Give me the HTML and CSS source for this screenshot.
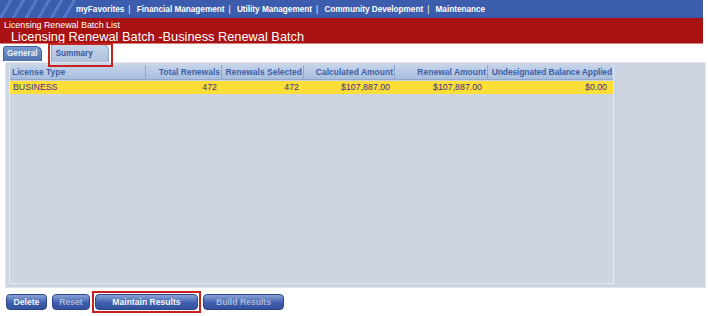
FILE: index.html
```html
<!DOCTYPE html>
<html lang="en">
<head>
    <meta charset="UTF-8">
    <title>Licensing Renewal Batch</title>
    <link rel="stylesheet" href="styles.css">
</head>
<body>
    <div class="topnav">
        <div class="stripes"></div>
        <div class="nav-links">
            <a>myFavorites</a><span class="sep">|</span>
            <a>Financial Management</a><span class="sep">|</span>
            <a>Utility Management</a><span class="sep">|</span>
            <a>Community Development</a><span class="sep">|</span>
            <a>Maintenance</a>
        </div>
    </div>

    <div class="titlebar">
        <div class="crumb">Licensing Renewal Batch List</div>
        <h1>Licensing Renewal Batch -Business Renewal Batch</h1>
    </div>

    <div class="tabs">
        <div class="tab">General</div>
        <div class="tab tab-active highlight">Summary</div>
    </div>

    <div class="panel">
        <div class="grid">
            <div class="row head">
                <div class="c c1">License Type</div>
                <div class="c c2 num">Total Renewals</div>
                <div class="c c3 num">Renewals Selected</div>
                <div class="c c4 num">Calculated Amount</div>
                <div class="c c5 num">Renewal Amount</div>
                <div class="c c6 num">Undesignated Balance Applied</div>
            </div>
            <div class="row data">
                <div class="c c1">BUSINESS</div>
                <div class="c c2 num">472</div>
                <div class="c c3 num">472</div>
                <div class="c c4 num">$107,887.00</div>
                <div class="c c5 num">$107,887.00</div>
                <div class="c c6 num">$0.00</div>
            </div>
        </div>
    </div>

    <div class="actions">
        <button class="btn b-delete">Delete</button>
        <button class="btn off b-reset">Reset</button>
        <span class="highlight btn-wrap"><button class="btn b-maintain">Maintain Results</button></span>
        <button class="btn off b-build">Build Results</button>
    </div>
</body>
</html>
```

FILE: styles.css
```css
body {
    margin: 0;
    width: 708px;
    height: 316px;
    background: #ffffff;
    font-family: "Liberation Sans", Arial, sans-serif;
    overflow: hidden;
}
.topnav {
    display: flex;
    align-items: center;
    height: 18px;
    width: 703px;
    background-color: #3c5cad;
}
.stripes {
    width: 76px;
    height: 100%;
    background: repeating-linear-gradient(120deg, #3c5cad 0, #3c5cad 8px, #5676c8 8px, #5676c8 11px);
}
.nav-links {
    color: #ffffff;
    font-size: 8.2px;
    font-weight: bold;
    white-space: nowrap;
}
.nav-links .sep {
    margin: 0 4px;
    font-weight: normal;
}
.titlebar {
    width: 703px;
    height: 25px;
    background-color: #a81212;
    color: #ffffff;
    border-bottom: 1px solid #d88080;
}
.crumb {
    font-size: 8.9px;
    padding: 2px 0 0 4px;
    line-height: 10px;
}
.titlebar h1 {
    margin: 0;
    font-size: 12.8px;
    font-weight: normal;
    line-height: 13px;
    padding-left: 11px;
}
.tabs {
    display: flex;
    align-items: flex-end;
    height: 18px;
    padding-left: 3px;
    gap: 9px;
}
.tab {
    height: 14px;
    margin-bottom: 1px;
    padding: 0 3px;
    font-size: 8.2px;
    font-weight: bold;
    line-height: 14px;
    color: #eef2fa;
    background: linear-gradient(#7a9bd0, #4e72ad);
    border-radius: 3px 6px 0 0;
    border: 1px solid #3d5f99;
    border-bottom: none;
}
.tab-active {
    height: 17px;
    line-height: 17px;
    margin-bottom: 0;
    width: 48px;
    padding: 0 4px;
    color: #3a55a0;
    background: linear-gradient(#c7d4e8, #aec0da);
    border-color: #8ea6cc;
}
.highlight {
    outline: 2px solid #c4231f;
    outline-offset: 1px;
}
.tabs .highlight {
    outline: none;
    position: relative;
}
.tabs .highlight::after {
    content: "";
    position: absolute;
    left: -4px;
    right: -5px;
    top: -2px;
    height: 20px;
    border: 2px solid #c4231f;
}
.panel {
    display: flex;
    margin-left: 5px;
    width: 696px;
    height: 222px;
    padding: 2px 0 0 3px;
    background-color: #cdd5e2;
    border: 1px solid #dfe5ee;
}
.grid {
    width: 603px;
    height: 218px;
    border: 1px solid #e6ebf2;
    border-top: none;
}
.row {
    display: flex;
    height: 14px;
    line-height: 14px;
    font-size: 8.5px;
    font-weight: bold;
}
.head {
    color: #3f5fa6;
    background: linear-gradient(#c4d4ea, #a8bedd);
    border-bottom: 1px solid #8fa6c9;
}
.head .c {
    border-right: 1px solid #8ea6cb;
    padding: 0 1px 0 2px;
}
.data {
    margin-top: 1px;
    color: #3d318f;
    background-color: #fddd38;
    font-weight: normal;
    font-size: 8.8px;
    height: 13px;
    line-height: 13px;
}
.c {
    padding: 0 5px 0 3px;
    box-sizing: border-box;
    white-space: nowrap;
    overflow: hidden;
}
.num {
    text-align: right;
}
.c1 { width: 136px; }
.c2 { width: 76px; }
.c3 { width: 82px; }
.c4 { width: 91px; }
.c5 { width: 93px; }
.c6 { width: 124px; }
.head .c6 {
    border-right: none;
    padding: 0;
    letter-spacing: -0.15px;
    overflow: visible;
}
.data .c5 { padding-right: 6px; }
.actions {
    display: flex;
    align-items: center;
    gap: 5px;
    padding: 6px 0 0 6px;
}
.btn {
    height: 16px;
    padding: 0;
    font-family: "Liberation Sans", Arial, sans-serif;
    font-size: 8.6px;
    font-weight: bold;
    color: #f4f6fb;
    background: linear-gradient(#8aa4d8, #3f5fae 55%, #34519c);
    border: 1px solid #2b4586;
    border-radius: 4px;
    line-height: 14px;
}
.btn.off {
    color: #a9b6d6;
}
.b-delete { width: 41px; }
.b-reset { width: 38px; }
.b-maintain { width: 103px; }
.b-build { width: 81px; }
.btn-wrap {
    display: flex;
}
```
